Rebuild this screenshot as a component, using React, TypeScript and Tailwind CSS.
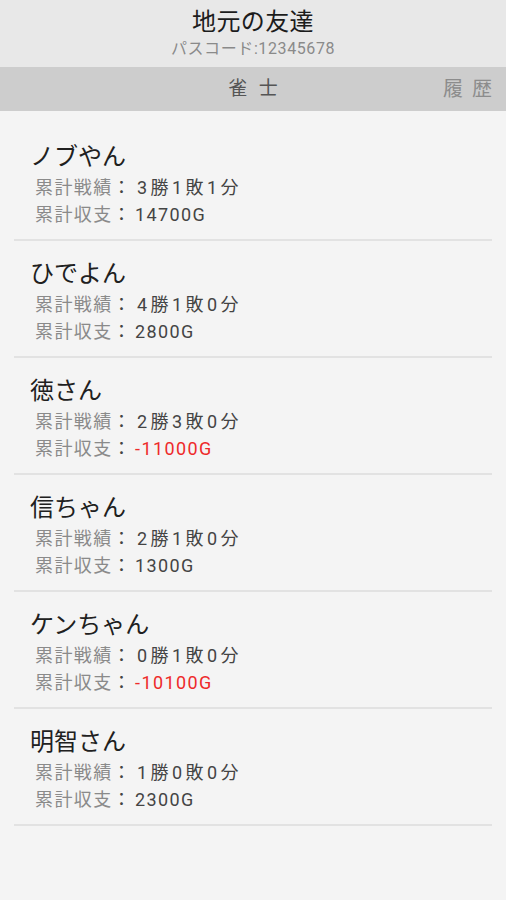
import React from "react";

type Player = {
    name: string;
    record: [number, number, number];
    balance: string;
};

const players: Player[] = [
    { name: "ノブやん", record: [3, 1, 1], balance: "14700G" },
    { name: "ひでよん", record: [4, 1, 0], balance: "2800G" },
    { name: "徳さん", record: [2, 3, 0], balance: "-11000G" },
    { name: "信ちゃん", record: [2, 1, 0], balance: "1300G" },
    { name: "ケンちゃん", record: [0, 1, 0], balance: "-10100G" },
    { name: "明智さん", record: [1, 0, 0], balance: "2300G" },
];

const font = "font-['Roboto','Noto_Sans_CJK_JP',sans-serif]";

const Num: React.FC<{ n: number }> = ({ n }) => <span className="px-[2px]">{n}</span>;

const App: React.FC = () => {
    return (
        <div className={`w-[506px] h-[900px] flex flex-col bg-[#f4f4f4] ${font}`}>
            {/* Header */}
            <div className="h-[67px] flex flex-col items-center bg-[#e8e8e8]">
                <h1 className="mt-[6px] text-[24px] leading-[32px] tracking-[0.4px] text-[#1c1c1c]">地元の友達</h1>
                <span className="mt-[1px] text-[16px] leading-[20px] tracking-[0.6px] text-[#8a8a8a]">パスコード:12345678</span>
            </div>

            {/* Tabs */}
            <div className="h-[44px] relative flex items-center justify-center bg-[#cdcdcd]">
                <span className="text-[19px] tracking-[0.6em] pl-[0.6em] text-[#555]">雀士</span>
                <span className="absolute right-[5px] text-[20px] tracking-[9px] text-[#8c8c8c]">履歴</span>
            </div>

            {/* Player list */}
            <div className="flex flex-col px-[14px] pt-[13px]">
                {players.map((p) => (
                    <div key={p.name} className="flex flex-col pt-[18px] pb-[11px] border-b-2 border-[#e2e2e2]">
                        <span className="pl-[16px] text-[24px] leading-[30px] text-[#202020]">{p.name}</span>
                        <div className="pl-[21px] mt-[2px] flex flex-col text-[18px] leading-[27px] tracking-[1.4px]">
                            <div>
                                <span className="text-[#8a8a8a]">累計戦績</span>
                                <span className="text-[#444]">：</span>
                                <span className="ml-[3px] text-[#444]">
                                    <Num n={p.record[0]} />勝<Num n={p.record[1]} />敗<Num n={p.record[2]} />分
                                </span>
                            </div>
                            <div>
                                <span className="text-[#8a8a8a]">累計収支</span>
                                <span className="text-[#444]">：</span>
                                <span className={`ml-[3px] ${p.balance.startsWith("-") ? "text-[#ee2a2a]" : "text-[#444]"}`}>{p.balance}</span>
                            </div>
                        </div>
                    </div>
                ))}
            </div>
        </div>
    );
};

export default App;
